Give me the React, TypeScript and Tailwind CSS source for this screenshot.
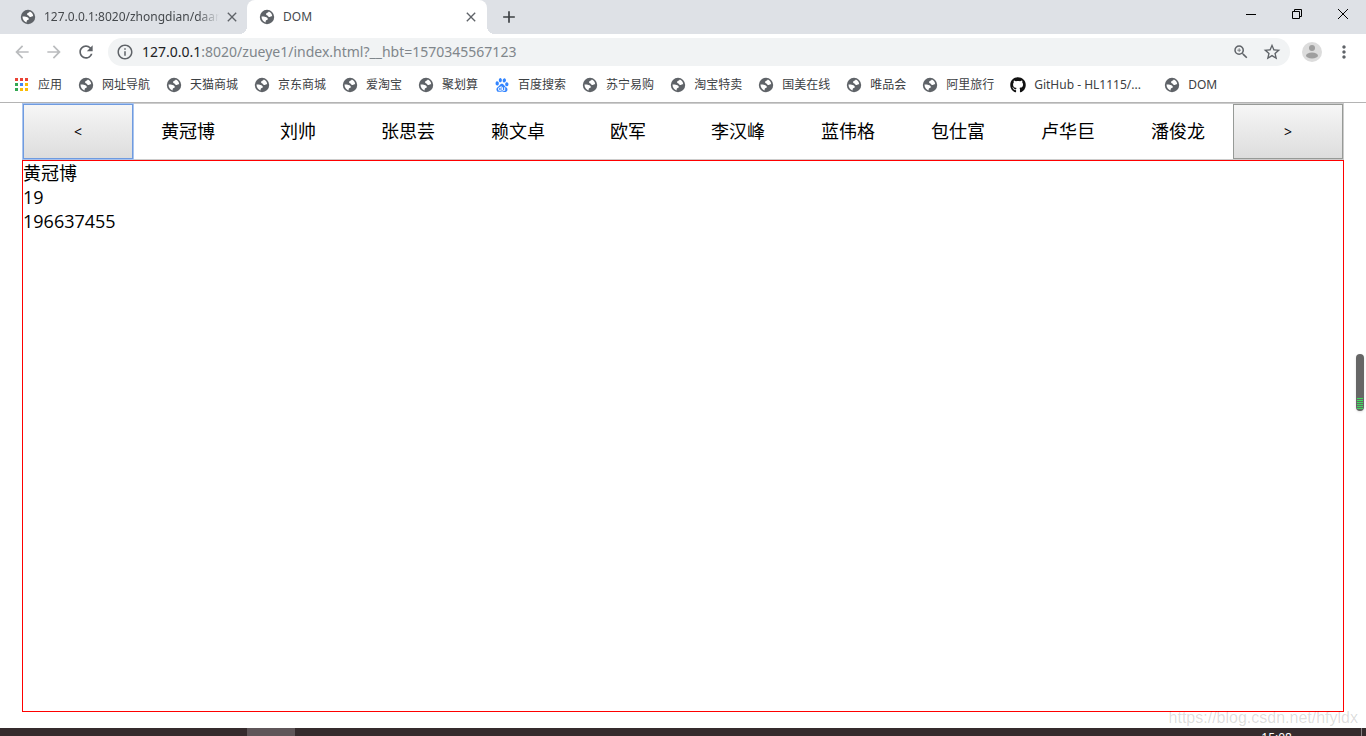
import { useState, type ReactNode } from "react"
import clsx from "clsx"
import { FaGithub } from "react-icons/fa"
import { SiBaidu } from "react-icons/si"
import { MdArrowBack, MdArrowForward, MdRefresh, MdInfoOutline, MdStarBorder, MdZoomIn, MdMoreVert, MdClose, MdAdd } from "react-icons/md"

const STUDENTS = [
  { name: "黄冠博", age: 19, qq: "196637455" },
  { name: "刘帅" },
  { name: "张思芸" },
  { name: "赖文卓" },
  { name: "欧军" },
  { name: "李汉峰" },
  { name: "蓝伟格" },
  { name: "包仕富" },
  { name: "卢华巨" },
  { name: "潘俊龙" },
]

const APP_DOTS = [
  "bg-[#ea4335]", "bg-[#ea4335]", "bg-[#ea4335]",
  "bg-[#34a853]", "bg-[#4285f4]", "bg-[#fbbc05]",
  "bg-[#34a853]", "bg-[#fbbc05]", "bg-[#fbbc05]",
]

function Globe() {
  return (
    <svg viewBox="0 0 16 16" className="size-4 shrink-0">
      <circle cx="8" cy="8" r="7.200" fill="#5f6368" />
      <path
        d="M9.800 2.600C9.600 4 7 3.700 7 5.200c0 1.100 1.500.8 1.900 1.700.3.900 1 1.200 1.900 1 .8-.2 1.200-.8 2.400-.7C13 5.100 11.700 3.300 9.800 2.600z"
        fill="#fff"
      />
      <path d="M2.500 7.600c1.600-.2 3.700 0 4.900.7 1.200.6 1.700 1.500 1.300 2.200-.3.6-1.500.6-1.900 1.200-.3.500 0 1.200-.3 1.700C4.200 12.700 2.400 10.300 2.500 7.600z" fill="#fff" />
    </svg>
  )
}

type BookmarkProps = { icon?: ReactNode; label: string; wide?: boolean }

function Bookmark({ icon = <Globe />, label, wide }: BookmarkProps) {
  return (
    <a href="#" className="flex shrink-0 items-center gap-2 whitespace-nowrap">
      {icon}
      <span className={clsx(wide && "w-[114px]")}>{label}</span>
    </a>
  )
}

function TabStrip() {
  return (
    <div className="flex h-[34px] bg-[#dee1e6] text-xs text-[#45494d]">
      <div className="flex w-[247px] items-center pr-[7px] pl-5">
        <Globe />
        <span className="ml-2 w-[175px] overflow-hidden whitespace-nowrap [mask-image:linear-gradient(to_right,black_88%,transparent)]">
          127.0.0.1:8020/zhongdian/daan
        </span>
        <button aria-label="Close tab" className="ml-auto text-[#5f6368]">
          <MdClose size={16} stroke="currentColor" />
        </button>
      </div>
      {/* the active tab flares out into the toolbar on both sides */}
      <div className="relative flex w-60 items-center rounded-t-lg bg-white pr-2 pl-3 before:absolute before:bottom-0 before:-left-2 before:size-2 before:bg-[radial-gradient(circle_at_0_0,transparent_8px,white_8px)] after:absolute after:-right-2 after:bottom-0 after:size-2 after:bg-[radial-gradient(circle_at_100%_0,transparent_8px,white_8px)]">
        <Globe />
        <span className="ml-2 flex-1">DOM</span>
        <button aria-label="Close tab" className="text-[#5f6368]">
          <MdClose size={16} stroke="currentColor" />
        </button>
      </div>
      <button aria-label="New tab" className="ml-3 text-[#3c4043]">
        <MdAdd size={20} stroke="currentColor" />
      </button>
      <div className="ml-auto flex h-7 text-black">
        <button aria-label="Minimize" className="flex w-[46px] items-center justify-center">
          <svg viewBox="0 0 10 10" className="size-2.5" stroke="currentColor"><path d="M0 5.500h10" /></svg>
        </button>
        <button aria-label="Restore" className="flex w-[46px] items-center justify-center">
          <svg viewBox="0 0 10 10" className="size-2.5" fill="none" stroke="currentColor"><path d="M.5 2.500h7v7h-7zM2.500 2.500v-2h7v7h-2" /></svg>
        </button>
        <button aria-label="Close" className="flex w-[46px] items-center justify-center">
          <svg viewBox="0 0 10 10" className="size-2.5" stroke="currentColor"><path d="M0 0l10 10M10 0L0 10" /></svg>
        </button>
      </div>
    </div>
  )
}

function Toolbar() {
  return (
    <div className="flex h-9 items-center px-3 text-[#5f6368]">
      <button aria-label="Back" className="text-[#babcbe]"><MdArrowBack size={20} /></button>
      <button aria-label="Forward" className="ml-3 text-[#babcbe]"><MdArrowForward size={20} /></button>
      <button aria-label="Reload" className="ml-3"><MdRefresh size={20} /></button>
      <div className="ml-3 flex h-7 flex-1 items-center rounded-full bg-[#f1f3f4] px-2">
        <MdInfoOutline size={18} />
        <div className="ml-2 flex-1 text-sm text-[#80868b]">
          <span className="text-[#202124]">127.0.0.1</span>:8020/zueye1/index.html?__hbt=1570345567123
        </div>
        <button aria-label="Zoom"><MdZoomIn size={18} /></button>
        <button aria-label="Bookmark this page" className="ml-3"><MdStarBorder size={20} /></button>
      </div>
      <button aria-label="Profile" className="ml-3">
        <svg viewBox="0 0 20 20" className="size-5">
          <circle cx="10" cy="10" r="10" fill="#dcdcdc" />
          <circle cx="10" cy="6" r="3" fill="#9e9e9e" />
          <ellipse cx="10" cy="13.500" rx="6" ry="3" fill="#9e9e9e" />
        </svg>
      </button>
      <button aria-label="Menu" className="ml-3"><MdMoreVert size={20} /></button>
    </div>
  )
}

function BookmarkBar() {
  return (
    <nav className="flex h-[33px] items-center gap-4 overflow-hidden border-b border-[#b4b4b4] pb-[3px] pl-[14px] text-xs text-[#3c4043]">
      <Bookmark
        label="应用"
        icon={
          <span className="grid size-4 grid-cols-[3px_3px_3px] content-center gap-[2px] pl-px">
            {APP_DOTS.map((dot, i) => <i key={i} className={`size-[3px] ${dot}`} />)}
          </span>
        }
      />
      <Bookmark label="网址导航" />
      <Bookmark label="天猫商城" />
      <Bookmark label="京东商城" />
      <Bookmark label="爱淘宝" />
      <Bookmark label="聚划算" />
      <Bookmark label="百度搜索" icon={<SiBaidu size={14} color="#3385ff" className="m-px" />} />
      <Bookmark label="苏宁易购" />
      <Bookmark label="淘宝特卖" />
      <Bookmark label="国美在线" />
      <Bookmark label="唯品会" />
      <Bookmark label="阿里旅行" />
      <Bookmark wide label="GitHub - HL1115/..." icon={<FaGithub size={16} color="#111" />} />
      <Bookmark label="DOM" />
    </nav>
  )
}

export default function App() {
  const [current, setCurrent] = useState(0)
  const student = STUDENTS[current]
  const step = (n: number) => setCurrent((current + n + STUDENTS.length) % STUDENTS.length)

  return (
    <div className="relative flex h-screen flex-col overflow-hidden bg-white font-['Noto_Sans','Noto_Sans_CJK_SC',sans-serif]">
      <TabStrip />
      <Toolbar />
      <BookmarkBar />

      <main className="mx-[22px] mb-4 flex flex-1 flex-col font-['Open_Sans','Noto_Sans_CJK_SC',sans-serif] text-lg text-black">
        <div className="grid h-[57px] grid-cols-12 border border-[#ccc]">
          <button
            onClick={() => step(-1)}
            className="border border-[#6f9be0] bg-linear-to-b from-[#f6f6f6] to-[#dddddd] text-sm outline outline-[#a9c4ee]"
          >
            &lt;
          </button>
          {STUDENTS.map((s, i) => (
            <button key={s.name} onClick={() => setCurrent(i)} className="pb-px">{s.name}</button>
          ))}
          <button
            onClick={() => step(1)}
            className="border border-[#979a97] bg-linear-to-b from-[#f6f6f6] to-[#dddddd] text-sm"
          >
            &gt;
          </button>
        </div>
        <div className="flex-1 border border-[#f00] leading-6">
          <p>{student.name}</p>
          <p>{student.age}</p>
          <p>{student.qq}</p>
        </div>
      </main>

      {/* Taskbar */}
      <footer className="flex h-2 overflow-hidden bg-[#352b2d]">
        <div className="ml-[247px] w-12 bg-[#5f5659]" />
        <time className="mt-1 mr-[69px] ml-auto text-xs leading-3 text-white">15:08</time>
        <div className="mr-1 w-px bg-[#8a8284]" />
      </footer>

      {/* Floating usage meter */}
      <div className="absolute top-[354px] right-[2px] flex h-[57px] w-2 flex-col justify-end gap-px rounded-full bg-[#666] px-px pb-[2px] shadow">
        {[0, 1, 2, 3, 4, 5].map((n) => <i key={n} className="h-px bg-[#3ddc5c]" />)}
      </div>
      <p className="absolute right-2 bottom-[6px] font-['Liberation_Sans',sans-serif] text-base text-black/15">
        https://blog.csdn.net/hfyldx
      </p>
    </div>
  )
}
